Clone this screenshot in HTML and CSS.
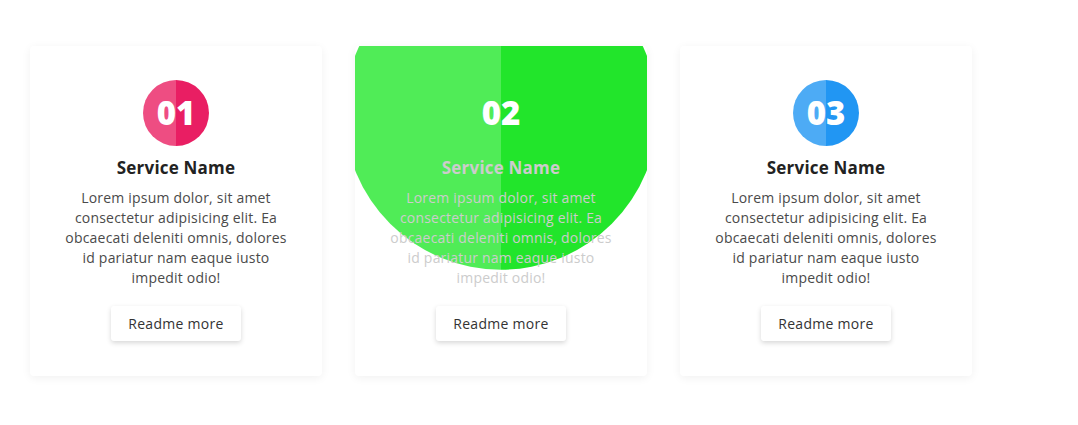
FILE: index.html
```html
<!DOCTYPE html>
<html lang="en">
<head>
<meta charset="UTF-8">
<meta name="viewport" content="width=device-width, initial-scale=1.0">
<title>Services</title>
<link rel="stylesheet" href="styles.css">
</head>
<body>
  <div class="services">
    <div class="card pink">
      <div class="num"><span>01</span></div>
      <h3>Service Name</h3>
      <p>Lorem ipsum dolor, sit amet<br>consectetur adipisicing elit. Ea<br>obcaecati deleniti omnis, dolores<br>id pariatur nam eaque iusto<br>impedit odio!</p>
      <a href="#" class="btn">Readme more</a>
    </div>

    <div class="card green active">
      <div class="num"><span>02</span></div>
      <h3>Service Name</h3>
      <p>Lorem ipsum dolor, sit amet<br>consectetur adipisicing elit. Ea<br>obcaecati deleniti omnis, dolores<br>id pariatur nam eaque iusto<br>impedit odio!</p>
      <a href="#" class="btn">Readme more</a>
    </div>

    <div class="card blue">
      <div class="num"><span>03</span></div>
      <h3>Service Name</h3>
      <p>Lorem ipsum dolor, sit amet<br>consectetur adipisicing elit. Ea<br>obcaecati deleniti omnis, dolores<br>id pariatur nam eaque iusto<br>impedit odio!</p>
      <a href="#" class="btn">Readme more</a>
    </div>
  </div>
</body>
</html>
```

FILE: styles.css
```css
body {
  font-family: 'Open Sans', 'Noto Sans', sans-serif;
  margin: 0;
  background: #fff;
}
.services {
  display: flex;
  gap: 33px;
  padding: 46px 30px;
}
.card {
  position: relative;
  width: 292px;
  box-sizing: border-box;
  padding: 34px 30px 35px;
  background: #fff;
  border-radius: 4px;
  box-shadow: 0 2px 10px rgba(0, 0, 0, 0.06);
  text-align: center;
  overflow: hidden;
}
.num {
  position: relative;
  width: 66px;
  height: 66px;
  margin: 0 auto;
}
.num::before {
  content: "";
  position: absolute;
  inset: 0;
  border-radius: 50%;
  background: linear-gradient(to right, var(--light) 50%, var(--main) 50%);
  transition: transform 0.4s;
}
.num span {
  position: relative;
  z-index: 2;
  display: block;
  line-height: 66px;
  font-size: 33px;
  font-weight: 800;
  color: #fff;
}
.pink { --main: #e91e63; --light: #ee4d82; }
.green { --main: #22e52b; --light: #50ec57; }
.blue { --main: #2196f3; --light: #4dabf5; }
.card h3 {
  position: relative;
  z-index: 2;
  margin: 10px 0 8px;
  font-size: 17px;
  font-weight: 700;
  color: #222;
  line-height: 24px;
  letter-spacing: 0.2px;
}
.card p {
  position: relative;
  z-index: 2;
  margin: 0 0 18px;
  font-size: 14px;
  line-height: 20px;
  color: #4a4a4a;
  letter-spacing: 0.2px;
}
.btn {
  position: relative;
  z-index: 2;
  display: inline-block;
  width: 130px;
  box-sizing: border-box;
  padding: 8px 0;
  font-size: 14px;
  line-height: 19px;
  letter-spacing: 0.3px;
  color: #333;
  text-decoration: none;
  background: #fff;
  border-radius: 3px;
  box-shadow: 0 2px 5px rgba(0, 0, 0, 0.16);
}
.card.active .num::before {
  transform: scale(4.75);
}
.card.active h3,
.card.active p {
  color: #ccc;
}
```
